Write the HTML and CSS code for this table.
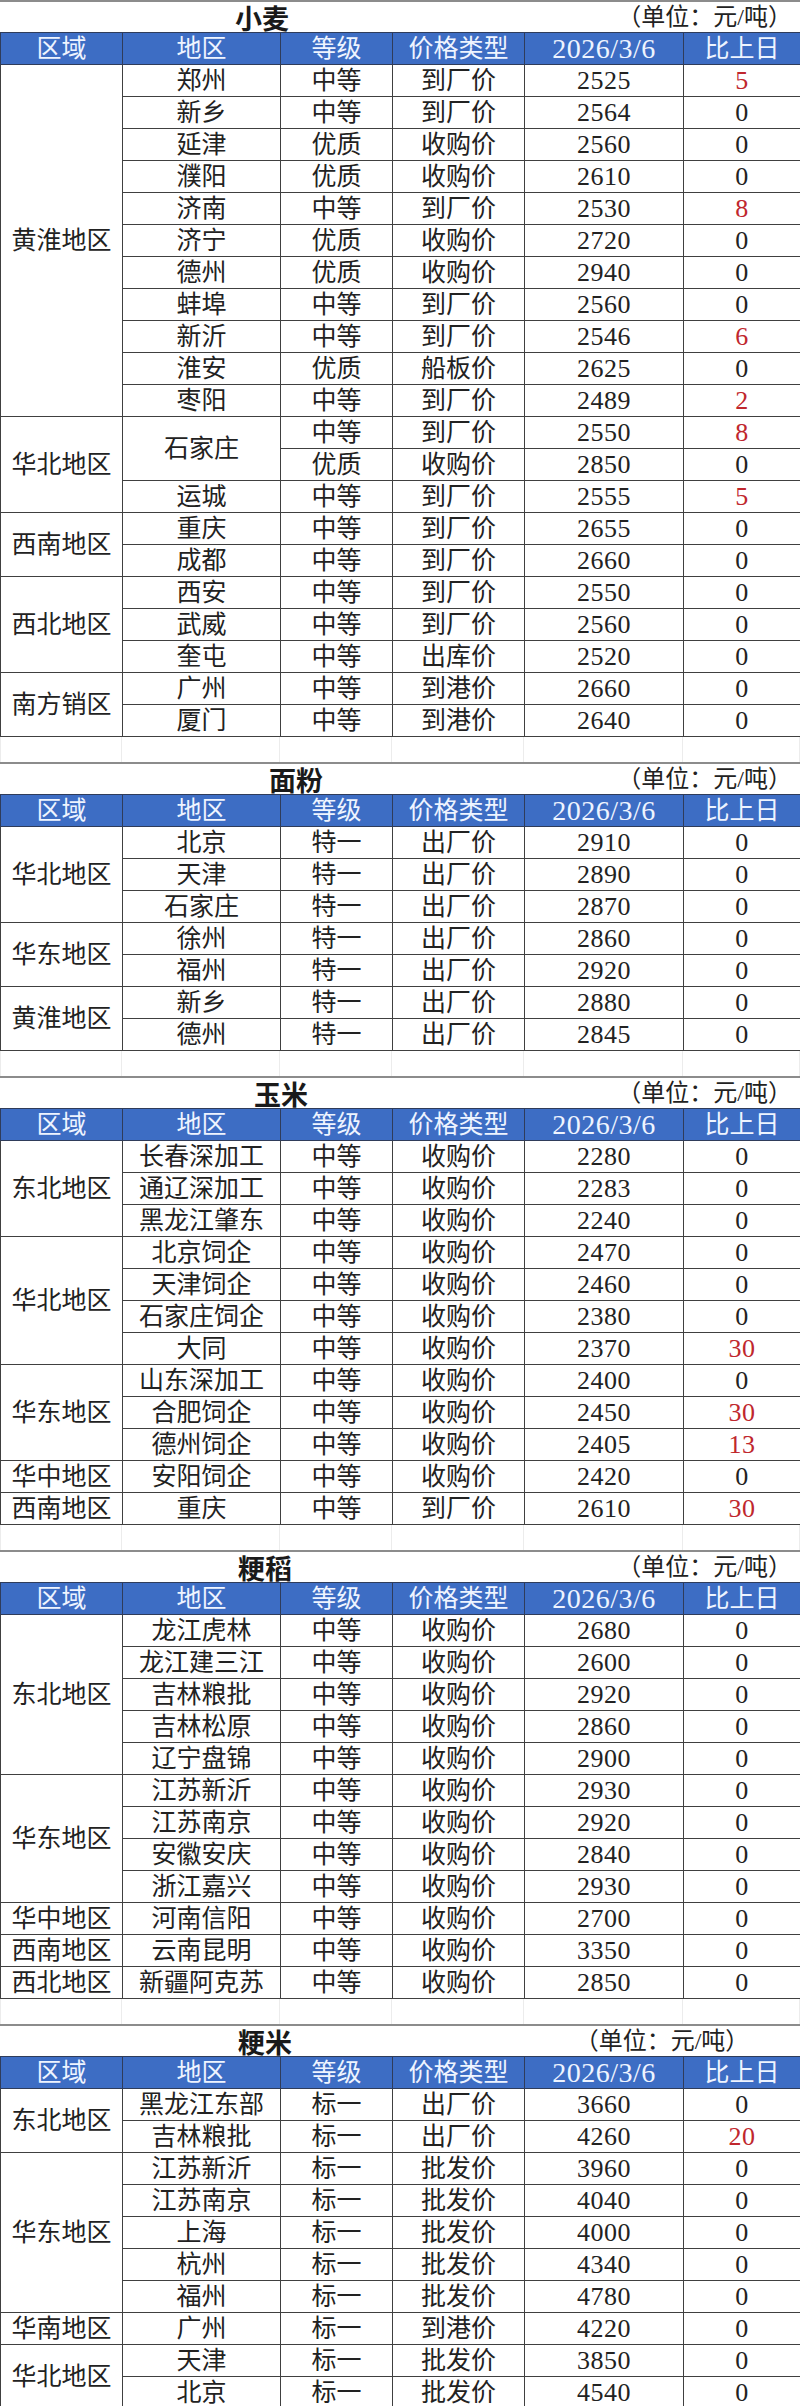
FILE: index.html
```html
<!DOCTYPE html>
<html lang="zh-CN">
<head>
<meta charset="utf-8">
<title>粮食价格</title>
<link rel="stylesheet" href="styles.css">
</head>
<body>
<div class="sheet">

  <div class="title-row">
    <span class="title">小麦</span>
    <span class="unit">（单位：元/吨）</span>
  </div>
  <table class="grid">
    <colgroup><col class="c1"><col class="c2"><col class="c3"><col class="c4"><col class="c5"><col class="c6"></colgroup>
    <thead>
      <tr><th>区域</th><th>地区</th><th>等级</th><th>价格类型</th><th class="num">2026/3/6</th><th>比上日</th></tr>
    </thead>
    <tbody>
      <tr><td rowspan="11">黄淮地区</td><td>郑州</td><td>中等</td><td>到厂价</td><td class="num">2525</td><td class="num up">5</td></tr>
      <tr><td>新乡</td><td>中等</td><td>到厂价</td><td class="num">2564</td><td class="num">0</td></tr>
      <tr><td>延津</td><td>优质</td><td>收购价</td><td class="num">2560</td><td class="num">0</td></tr>
      <tr><td>濮阳</td><td>优质</td><td>收购价</td><td class="num">2610</td><td class="num">0</td></tr>
      <tr><td>济南</td><td>中等</td><td>到厂价</td><td class="num">2530</td><td class="num up">8</td></tr>
      <tr><td>济宁</td><td>优质</td><td>收购价</td><td class="num">2720</td><td class="num">0</td></tr>
      <tr><td>德州</td><td>优质</td><td>收购价</td><td class="num">2940</td><td class="num">0</td></tr>
      <tr><td>蚌埠</td><td>中等</td><td>到厂价</td><td class="num">2560</td><td class="num">0</td></tr>
      <tr><td>新沂</td><td>中等</td><td>到厂价</td><td class="num">2546</td><td class="num up">6</td></tr>
      <tr><td>淮安</td><td>优质</td><td>船板价</td><td class="num">2625</td><td class="num">0</td></tr>
      <tr><td>枣阳</td><td>中等</td><td>到厂价</td><td class="num">2489</td><td class="num up">2</td></tr>
      <tr><td rowspan="3">华北地区</td><td rowspan="2">石家庄</td><td>中等</td><td>到厂价</td><td class="num">2550</td><td class="num up">8</td></tr>
      <tr><td>优质</td><td>收购价</td><td class="num">2850</td><td class="num">0</td></tr>
      <tr><td>运城</td><td>中等</td><td>到厂价</td><td class="num">2555</td><td class="num up">5</td></tr>
      <tr><td rowspan="2">西南地区</td><td>重庆</td><td>中等</td><td>到厂价</td><td class="num">2655</td><td class="num">0</td></tr>
      <tr><td>成都</td><td>中等</td><td>到厂价</td><td class="num">2660</td><td class="num">0</td></tr>
      <tr><td rowspan="3">西北地区</td><td>西安</td><td>中等</td><td>到厂价</td><td class="num">2550</td><td class="num">0</td></tr>
      <tr><td>武威</td><td>中等</td><td>到厂价</td><td class="num">2560</td><td class="num">0</td></tr>
      <tr><td>奎屯</td><td>中等</td><td>出库价</td><td class="num">2520</td><td class="num">0</td></tr>
      <tr><td rowspan="2">南方销区</td><td>广州</td><td>中等</td><td>到港价</td><td class="num">2660</td><td class="num">0</td></tr>
      <tr><td>厦门</td><td>中等</td><td>到港价</td><td class="num">2640</td><td class="num">0</td></tr>
    </tbody>
  </table>

  <div class="gap"><span></span><span></span><span></span><span></span><span></span><span></span></div>

  <div class="title-row title-row--flour">
    <span class="title">面粉</span>
    <span class="unit">（单位：元/吨）</span>
  </div>
  <table class="grid">
    <colgroup><col class="c1"><col class="c2"><col class="c3"><col class="c4"><col class="c5"><col class="c6"></colgroup>
    <thead>
      <tr><th>区域</th><th>地区</th><th>等级</th><th>价格类型</th><th class="num">2026/3/6</th><th>比上日</th></tr>
    </thead>
    <tbody>
      <tr><td rowspan="3">华北地区</td><td>北京</td><td>特一</td><td>出厂价</td><td class="num">2910</td><td class="num">0</td></tr>
      <tr><td>天津</td><td>特一</td><td>出厂价</td><td class="num">2890</td><td class="num">0</td></tr>
      <tr><td>石家庄</td><td>特一</td><td>出厂价</td><td class="num">2870</td><td class="num">0</td></tr>
      <tr><td rowspan="2">华东地区</td><td>徐州</td><td>特一</td><td>出厂价</td><td class="num">2860</td><td class="num">0</td></tr>
      <tr><td>福州</td><td>特一</td><td>出厂价</td><td class="num">2920</td><td class="num">0</td></tr>
      <tr><td rowspan="2">黄淮地区</td><td>新乡</td><td>特一</td><td>出厂价</td><td class="num">2880</td><td class="num">0</td></tr>
      <tr><td>德州</td><td>特一</td><td>出厂价</td><td class="num">2845</td><td class="num">0</td></tr>
    </tbody>
  </table>

  <div class="gap"><span></span><span></span><span></span><span></span><span></span><span></span></div>

  <div class="title-row title-row--corn">
    <span class="title">玉米</span>
    <span class="unit">（单位：元/吨）</span>
  </div>
  <table class="grid">
    <colgroup><col class="c1"><col class="c2"><col class="c3"><col class="c4"><col class="c5"><col class="c6"></colgroup>
    <thead>
      <tr><th>区域</th><th>地区</th><th>等级</th><th>价格类型</th><th class="num">2026/3/6</th><th>比上日</th></tr>
    </thead>
    <tbody>
      <tr><td rowspan="3">东北地区</td><td>长春深加工</td><td>中等</td><td>收购价</td><td class="num">2280</td><td class="num">0</td></tr>
      <tr><td>通辽深加工</td><td>中等</td><td>收购价</td><td class="num">2283</td><td class="num">0</td></tr>
      <tr><td>黑龙江肇东</td><td>中等</td><td>收购价</td><td class="num">2240</td><td class="num">0</td></tr>
      <tr><td rowspan="4">华北地区</td><td>北京饲企</td><td>中等</td><td>收购价</td><td class="num">2470</td><td class="num">0</td></tr>
      <tr><td>天津饲企</td><td>中等</td><td>收购价</td><td class="num">2460</td><td class="num">0</td></tr>
      <tr><td>石家庄饲企</td><td>中等</td><td>收购价</td><td class="num">2380</td><td class="num">0</td></tr>
      <tr><td>大同</td><td>中等</td><td>收购价</td><td class="num">2370</td><td class="num up">30</td></tr>
      <tr><td rowspan="3">华东地区</td><td>山东深加工</td><td>中等</td><td>收购价</td><td class="num">2400</td><td class="num">0</td></tr>
      <tr><td>合肥饲企</td><td>中等</td><td>收购价</td><td class="num">2450</td><td class="num up">30</td></tr>
      <tr><td>德州饲企</td><td>中等</td><td>收购价</td><td class="num">2405</td><td class="num up">13</td></tr>
      <tr><td>华中地区</td><td>安阳饲企</td><td>中等</td><td>收购价</td><td class="num">2420</td><td class="num">0</td></tr>
      <tr><td>西南地区</td><td>重庆</td><td>中等</td><td>到厂价</td><td class="num">2610</td><td class="num up">30</td></tr>
    </tbody>
  </table>

  <div class="gap"><span></span><span></span><span></span><span></span><span></span><span></span></div>

  <div class="title-row title-row--paddy">
    <span class="title">粳稻</span>
    <span class="unit">（单位：元/吨）</span>
  </div>
  <table class="grid">
    <colgroup><col class="c1"><col class="c2"><col class="c3"><col class="c4"><col class="c5"><col class="c6"></colgroup>
    <thead>
      <tr><th>区域</th><th>地区</th><th>等级</th><th>价格类型</th><th class="num">2026/3/6</th><th>比上日</th></tr>
    </thead>
    <tbody>
      <tr><td rowspan="5">东北地区</td><td>龙江虎林</td><td>中等</td><td>收购价</td><td class="num">2680</td><td class="num">0</td></tr>
      <tr><td>龙江建三江</td><td>中等</td><td>收购价</td><td class="num">2600</td><td class="num">0</td></tr>
      <tr><td>吉林粮批</td><td>中等</td><td>收购价</td><td class="num">2920</td><td class="num">0</td></tr>
      <tr><td>吉林松原</td><td>中等</td><td>收购价</td><td class="num">2860</td><td class="num">0</td></tr>
      <tr><td>辽宁盘锦</td><td>中等</td><td>收购价</td><td class="num">2900</td><td class="num">0</td></tr>
      <tr><td rowspan="4">华东地区</td><td>江苏新沂</td><td>中等</td><td>收购价</td><td class="num">2930</td><td class="num">0</td></tr>
      <tr><td>江苏南京</td><td>中等</td><td>收购价</td><td class="num">2920</td><td class="num">0</td></tr>
      <tr><td>安徽安庆</td><td>中等</td><td>收购价</td><td class="num">2840</td><td class="num">0</td></tr>
      <tr><td>浙江嘉兴</td><td>中等</td><td>收购价</td><td class="num">2930</td><td class="num">0</td></tr>
      <tr><td>华中地区</td><td>河南信阳</td><td>中等</td><td>收购价</td><td class="num">2700</td><td class="num">0</td></tr>
      <tr><td>西南地区</td><td>云南昆明</td><td>中等</td><td>收购价</td><td class="num">3350</td><td class="num">0</td></tr>
      <tr><td>西北地区</td><td>新疆阿克苏</td><td>中等</td><td>收购价</td><td class="num">2850</td><td class="num">0</td></tr>
    </tbody>
  </table>

  <div class="gap"><span></span><span></span><span></span><span></span><span></span><span></span></div>

  <div class="title-row title-row--rice">
    <span class="title">粳米</span>
    <span class="unit">（单位：元/吨）</span>
  </div>
  <table class="grid">
    <colgroup><col class="c1"><col class="c2"><col class="c3"><col class="c4"><col class="c5"><col class="c6"></colgroup>
    <thead>
      <tr><th>区域</th><th>地区</th><th>等级</th><th>价格类型</th><th class="num">2026/3/6</th><th>比上日</th></tr>
    </thead>
    <tbody>
      <tr><td rowspan="2">东北地区</td><td>黑龙江东部</td><td>标一</td><td>出厂价</td><td class="num">3660</td><td class="num">0</td></tr>
      <tr><td>吉林粮批</td><td>标一</td><td>出厂价</td><td class="num">4260</td><td class="num up">20</td></tr>
      <tr><td rowspan="5">华东地区</td><td>江苏新沂</td><td>标一</td><td>批发价</td><td class="num">3960</td><td class="num">0</td></tr>
      <tr><td>江苏南京</td><td>标一</td><td>批发价</td><td class="num">4040</td><td class="num">0</td></tr>
      <tr><td>上海</td><td>标一</td><td>批发价</td><td class="num">4000</td><td class="num">0</td></tr>
      <tr><td>杭州</td><td>标一</td><td>批发价</td><td class="num">4340</td><td class="num">0</td></tr>
      <tr><td>福州</td><td>标一</td><td>批发价</td><td class="num">4780</td><td class="num">0</td></tr>
      <tr><td>华南地区</td><td>广州</td><td>标一</td><td>到港价</td><td class="num">4220</td><td class="num">0</td></tr>
      <tr><td rowspan="2">华北地区</td><td>天津</td><td>标一</td><td>批发价</td><td class="num">3850</td><td class="num">0</td></tr>
      <tr><td>北京</td><td>标一</td><td>批发价</td><td class="num">4540</td><td class="num">0</td></tr>
    </tbody>
  </table>

</div>
</body>
</html>
```

FILE: styles.css
```css
* {
  box-sizing: border-box;
}

body {
  margin: 0;
  background: #ffffff;
  color: #222222;
  font-family: "Liberation Serif", "Noto Sans CJK SC", serif;
}

.sheet {
  width: 800px;
}

/* ---------- section title ---------- */
.title-row {
  display: grid;
  grid-template-columns: 524px 276px;
  align-items: center;
  height: 32px;
  border-top: 2px solid #8c8c8c;
}

.title {
  text-align: center;
  font-family: "Noto Sans CJK SC", sans-serif;
  font-size: 27px;
  font-weight: bold;
  line-height: 1;
  color: #1a1a1a;
}

.unit {
  text-align: right;
  padding-right: 8px;
  font-family: "Liberation Serif", "Noto Sans CJK SC", serif;
  font-size: 24px;
  line-height: 1;
  color: #222222;
}

.title-row--flour .title {
  padding-left: 68px;
}

.title-row--corn .title {
  padding-left: 38px;
}

.title-row--paddy .title,
.title-row--rice .title {
  padding-left: 6px;
}

.title-row--rice .unit {
  text-align: center;
  padding-right: 0;
}

/* ---------- blank spacer between tables ---------- */
.gap {
  display: grid;
  grid-template-columns: 122px 158px 112px 132px 159px 117px;
  height: 25px;
}

.gap span {
  border-right: 1px solid #ececec;
}

.gap span:first-child {
  border-left: 1px solid #ececec;
}

/* ---------- table ---------- */
.grid {
  width: 800px;
  border-collapse: collapse;
  table-layout: fixed;
}

.c1 { width: 122px; }
.c2 { width: 158px; }
.c3 { width: 112px; }
.c4 { width: 132px; }
.c5 { width: 159px; }
.c6 { width: 117px; }

.grid th,
.grid td {
  height: 32px;
  padding: 0;
  border: 1px solid #404040;
  text-align: center;
  vertical-align: middle;
  font-weight: normal;
  font-size: 25px;
  line-height: 1;
  white-space: nowrap;
}

.grid th {
  background: #3d6dc4;
  color: #eef4ff;
  font-size: 25px;
  border-color: #2f3c5a;
}

.grid th.num {
  font-size: 28px;
  letter-spacing: 0.5px;
}

.grid td.num {
  font-size: 26px;
  letter-spacing: 0.5px;
}

.grid td.up {
  color: #c0272d;
}
```
